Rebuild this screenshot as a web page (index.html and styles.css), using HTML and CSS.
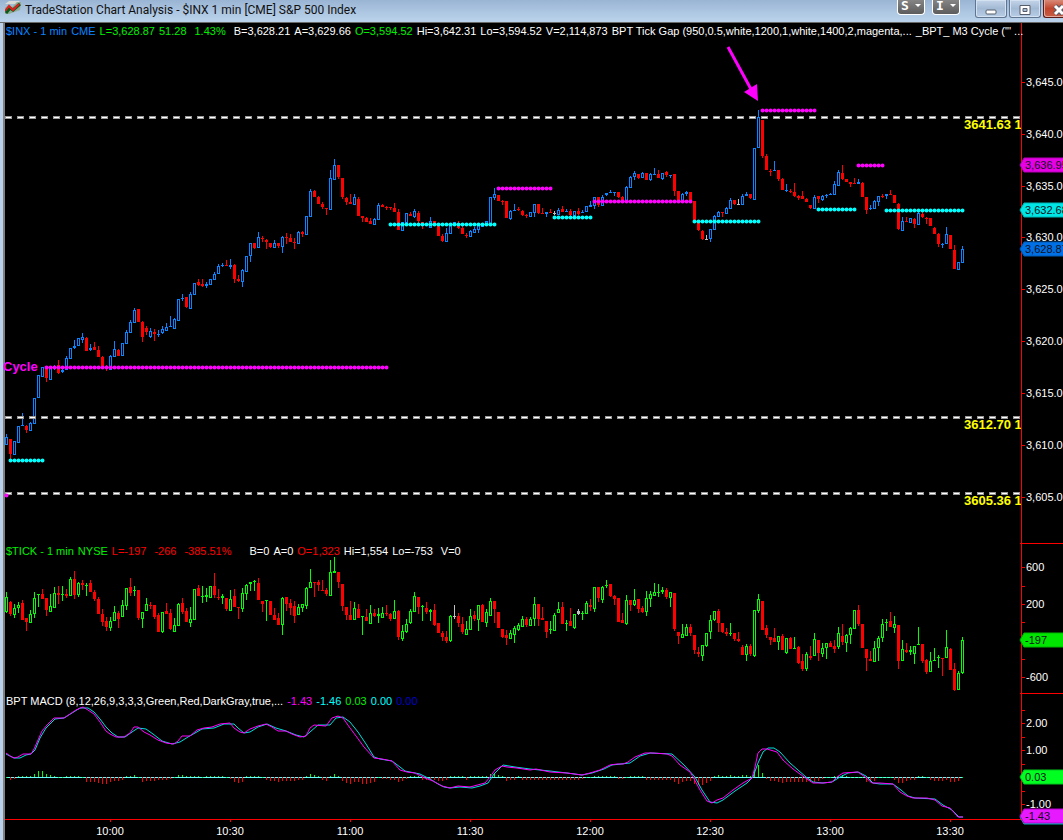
FILE: index.html
```html
<!DOCTYPE html>
<html lang="en">
<head>
    <meta charset="UTF-8">
    <meta name="viewport" content="width=device-width, initial-scale=1.0">
    <title>TradeStation Chart Analysis - $INX 1 min [CME] S&amp;P 500 Index</title>
    <link rel="stylesheet" href="styles.css">
</head>
<body>
    <div class="window">
        <header class="title-bar">
            <svg class="app-icon" viewBox="0 0 16 14" aria-hidden="true">
                <path d="M0 3 L4 0 H15 L11 3 Z" fill="#d8dcd8"/>
                <path d="M0 7 L4 3 L7 6 L12 1 L16 1 L15 9 L4 13 L0 13 Z" fill="#8fae96"/>
                <path d="M1 12 L5 7 L8 9 L15 3" fill="none" stroke="#0b5a1c" stroke-width="3"/>
                <path d="M0 10 L4 5 L8 9 L14 3" fill="none" stroke="#e02020" stroke-width="2"/>
            </svg>
            <h1 class="title">TradeStation Chart Analysis - $INX 1 min [CME] S&amp;P 500 Index</h1>
            <div class="tools">
                <button class="tool" type="button" aria-label="Symbol">S<span class="caret"></span></button>
                <button class="tool" type="button" aria-label="Interval">I<span class="caret"></span></button>
            </div>
            <div class="controls">
                <button class="control" type="button" aria-label="Minimize">
                    <svg viewBox="0 0 12 12"><rect x="1" y="6" width="10" height="4" rx="1" fill="#fff" stroke="#565d68"/></svg>
                </button>
                <button class="control" type="button" aria-label="Maximize">
                    <svg viewBox="0 0 12 12"><path d="M1 1.5 H11 V10.5 H1 Z M4 4.5 V7.500 H8 V4.5 Z" fill="#fff" fill-rule="evenodd" stroke="#565d68"/></svg>
                </button>
                <button class="control close" type="button" aria-label="Close">
                    <svg viewBox="0 0 12 12"><path d="M2 2 L10 10 M10 2 L2 10" stroke="#565d68" stroke-width="5"/><path d="M2 2 L10 10 M10 2 L2 10" stroke="#fff" stroke-width="3"/></svg>
                </button>
            </div>
        </header>

        <main class="chart">
            <section class="pane">
                <div class="status">
                    <span class="blue">$INX - 1 min</span>
                    <span class="blue">CME</span>
                    <span class="green">L=3,628.87</span>
                    <span class="green">51.28</span>
                    <span class="green push">1.43%</span>
                    <span class="push">B=3,628.21</span>
                    <span>A=3,629.66</span>
                    <span class="green">O=3,594.52</span>
                    <span>Hi=3,642.31</span>
                    <span>Lo=3,594.52</span>
                    <span>V=2,114,873</span>
                    <span>BPT Tick Gap (950,0.5,white,1200,1,white,1400,2,magenta,...</span>
                    <span>_BPT_ M3 Cycle ("' ...</span>
                </div>
                <svg class="plot" id="price" viewBox="5 23 1058 520"></svg>
            </section>

            <section class="pane">
                <div class="status">
                    <span class="green">$TICK - 1 min</span>
                    <span class="green">NYSE</span>
                    <span class="red">L=-197</span>
                    <span class="red push">-266</span>
                    <span class="red push">-385.51%</span>
                    <span class="push-more">B=0</span>
                    <span>A=0</span>
                    <span class="red">O=1,323</span>
                    <span>Hi=1,554</span>
                    <span>Lo=-753</span>
                    <span class="push">V=0</span>
                </div>
                <svg class="plot" id="tick" viewBox="5 543 1058 150"></svg>
            </section>

            <section class="pane">
                <div class="status">
                    <span>BPT MACD (8,12,26,9,3,3,3,Green,Red,DarkGray,true,...</span>
                    <span class="magenta">-1.43</span>
                    <span class="cyan">-1.46</span>
                    <span class="green">0.03</span>
                    <span class="cyan">0.00</span>
                    <span class="navy">0.00</span>
                </div>
                <svg class="plot" id="macd" viewBox="5 693 1058 126"></svg>
            </section>

            <svg class="plot" id="time" viewBox="5 819 1058 21"></svg>
        </main>
    </div>

    <script src="chart.js"></script>
</body>
</html>
```

FILE: styles.css
```css
* {
    box-sizing: border-box;
}

body {
    margin: 0;
    background-color: #000;
    color: #fff;
    font-family: "Liberation Sans", Arial, sans-serif;
    font-size: 11px;
    overflow-x: hidden;
}

.window {
    min-height: 100vh;
    border-left: 3px solid #b9d1ea;
}

/* title bar */
.title-bar {
    display: flex;
    align-items: flex-start;
    height: 23px;
    margin-left: -3px;
    padding-left: 5px;
    background: linear-gradient(#9ab5d4, #b9d1ea 20px);
    border-bottom: 1px solid #696969;
    overflow: hidden;
}

.app-icon {
    width: 16px;
    height: 14px;
    margin-top: 1px;
    flex: none;
}

.title {
    flex: 1;
    min-width: 0;
    margin: 0 0 0 4px;
    color: #111;
    font-family: Roboto, "Open Sans", sans-serif;
    font-size: 12px;
    font-weight: 400;
    line-height: 20px;
    white-space: nowrap;
    overflow: hidden;
}

.tools {
    display: flex;
    gap: 7px;
    margin-right: 15px;
}

.tool {
    display: flex;
    align-items: center;
    justify-content: center;
    gap: 6px;
    width: 28px;
    height: 15px;
    padding: 0 0 3px;
    border: 1px solid #fff;
    border-top: 0;
    border-radius: 0 0 4px 4px;
    background: linear-gradient(#858585, #5c5c5c);
    color: #fff;
    font-family: "DejaVu Sans Mono", monospace;
    font-size: 13px;
    font-weight: bold;
    line-height: 11px;
}

.caret {
    border: 3px solid transparent;
    border-top-color: #fff;
    border-bottom: 0;
}

.controls {
    display: flex;
    gap: 2px;
}

.control {
    width: 32px;
    height: 18px;
    padding: 2px 0 0;
    border: 1px solid #5f7590;
    border-top: 0;
    border-radius: 0 0 3px 3px;
    background: linear-gradient(#c3d4e8, #a3bad5 50%, #b8cde6);
    box-shadow: inset 0 0 0 1px #d3e1f1;
    text-align: center;
}

.control svg {
    width: 12px;
    height: 12px;
    display: block;
    margin: 0 auto;
}

.close {
    width: 20px;
    border-right: 0;
    border-color: #5a1a14;
    border-radius: 0 0 0 3px;
    background: linear-gradient(#d98a78, #c0452c 50%, #c75c45);
    box-shadow: inset 1px -1px 0 #e3a99d;
}

.close svg {
    margin-left: 9px;
}

/* chart */
.chart {
    border-left: 2px solid #808080;
}

.pane {
    display: grid;
}

.pane > * {
    grid-area: 1 / 1;
}

.status {
    display: flex;
    gap: 4px;
    align-self: start;
    z-index: 1;
    padding-left: 1px;
    line-height: 16px;
    white-space: nowrap;
}

.push {
    margin-left: 4px;
}

.push-more {
    margin-left: 14px;
}

.plot {
    display: block;
    width: 100%;
    height: auto;
    overflow: visible;
}

.plot text {
    fill: #fff;
    font-size: 11px;
}

.plot .level-label {
    fill: #ff0;
    font-size: 13px;
    font-weight: bold;
}

.plot .cycle-label {
    fill: #f0f;
    font-size: 13px;
    font-weight: bold;
}

.plot .tag-text {
    fill: #101020;
}

.blue {
    color: #0a84ff;
}

.green {
    color: #00f000;
}

.red {
    color: #f00;
}

.magenta {
    color: #f0f;
}

.cyan {
    color: #0ff;
}

.navy {
    color: #00c;
}
```

FILE: chart.js
```js
const UP = '#0a84ff';
const AXIS_X = 1021;

// one entry per minute: direction, then high,top,bottom,low (or top,bottom when there is no wick)
const priceBars = `
u434,437,445,445 d439,439,454,459 u441,455 u426,443 u413,425,426,426 d425,426,430,433 u422,423,431,431 u398,424
u375,398 u367,377 d368,368,378,382 u368,380 u365,367,368,370 d360,365,373,374 u369,370,372,373 u356,358,370,370
u348,359 u340,346,348,349 u338,346 u333,337,340,343 d337,338,351,351 u344,348,350,351 d342,347,350,350 d346,350,357,357
d356,357,368,368 d365,368,369,371 u355,356,370,370 u341,349,357,357 d349,350,356,356 u343,356 u330,332,344,344 u320,322,333,333
u308,310,323,323 d309,322 d321,322,337,342 d326,328,332,335 u328,331,337,338 d329,332,334,341 u330,334,335,337 u326,329,333,334
u323,327,331,331 u316,326,327,327 u318,319,329,329 u299,321 u294,298,299,301 d297,297,307,308 u292,294,309,309 u283,295
d279,282,285,286 d279,284,286,287 u282,284,286,288 u279,285 u272,274,280,280 u264,266,274,274 u263,265,266,267 d260,265,266,266
u259,265,267,269 d264,265,279,283 d275,279,281,282 u269,270,282,287 u256,272 u243,243,256,262 d243,243,248,249 u232,237,248,248
d236,238,239,242 d239,240,242,249 d243,243,247,248 u240,243,248,248 d243,243,246,248 u236,237,247,253 d233,237,238,244 d234,238,242,242
d238,242,243,249 u231,232,244,244 d231,232,234,237 u216,235 u189,191,217,217 d190,191,197,197 d196,197,204,204 d202,204,207,209
d208,208,209,215 u170,178,210,210 u159,165,180,180 d165,165,177,179 d178,178,197,199 d197,198,202,205 d194,202,204,204 u194,197,205,205
d197,199,216,216 d216,216,218,222 d217,218,222,222 d218,221,224,224 u218,219,225,225 u203,205,220,220 d204,205,207,207 d206,207,208,210
d207,207,208,210 d203,208,212,212 d209,212,230,230 u222,231 u213,223 d212,214,216,216 u209,211,217,218 d211,213,221,223
d222,222,226,229 u223,226 u217,221,228,228 d221,224 d224,236 d234,236,241,242 u228,233,242,242 u225,234
u222,225 d221,225,228,229 d226,228,234,234 d233,235,236,238 u230,231,237,237 u227,229,233,233 u224,224,230,233 u224,227
u221,225 u197,226 u188,194,198,200 d195,201 d200,201,202,205 d201,218 u210,211,219,220 u204,210,211,211
d207,209,210,211 d210,211,215,216 d214,215,216,218 u212,217 u204,204,213,217 d204,204,213,214 d208,213,214,214 u212,212,214,217
d209,212,213,213 n211,213,214,215 u208,210,215,215 d206,209,212,212 u209,211,212,212 d209,211,215,216 u211,216 d208,211,214,215
u210,212,213,213 u206,212 u201,205,207,207 u197,197,206,209 d197,197,205,207 u195,197,206,206 u193,193,195,196 u190,192,193,193
u192,192,193,196 d192,192,197,198 d196,197,200,200 u186,187,202,202 u176,177,188,188 u171,173,177,180 d174,174,178,179 u172,173,178,178
d173,180 u173,174,180,181 u168,174,175,175 d170,174,178,178 u173,173,179,180 d171,172,175,177 u175,175,176,178 d174,174,191,196
d191,200 u193,194,201,201 u191,192,194,196 d192,201 d201,222 d222,222,230,231 d230,231,239,240 n235,239,240,240
u229,229,239,242 u215,216,230,230 u211,212,217,217 d212,212,213,217 u207,208,214,214 u198,200,209,209 d200,200,204,205 n199,204,205,205
u194,196,205,205 u192,194,196,196 d194,194,198,199 u148,200 u110,117,148,148 d120,120,156,158 d154,156,170,170 d169,171,172,176
u161,170,171,171 d170,170,179,181 d178,179,190,190 u184,190,191,192 d189,191,192,193 d183,192,196,197 d195,196,198,200 d191,196,199,199
d198,199,202,202 d205,205,208,209 u195,197,209,209 d196,196,199,203 u195,196,200,201 u194,195,196,198 u193,194,195,195 u181,184,195,195
u170,172,186,186 d165,173,179,180 d179,182 d182,182,184,187 d178,183,184,184 u179,182,184,184 d182,183,197,197 d197,197,210,214
u205,208,209,210 u200,201,209,209 u196,196,202,206 d194,196,197,198 u194,194,196,199 d190,194,195,195 d195,203 d203,204,229,230
u217,221,231,231 d217,221,222,222 u218,223 d218,219,224,228 u212,213,225,225 d212,214,217,218 d217,218,219,224 d218,226
d227,228,234,234 d233,234,244,247 u243,244,245,248 u227,234,244,244 d235,249 d245,250,269,269 u262,270 u246,249,263,263`;

const tickBars = `
u592,597,612,613 d601,602,614,616 u604,608,615,618 u602,605,608,613 d600,603,620,620 d618,618,622,631 u610,614,623,623 u592,598,614,618
u594,594,595,607 d589,594,599,599 d598,598,610,616 u594,606,612,612 u587,593,608,608 d586,593,595,604 u586,594,595,601 d589,594,596,598
u577,579,596,596 d571,579,595,599 u582,583,595,597 d580,583,585,590 u583,585,586,596 d580,583,592,592 d590,592,599,601 d597,599,614,614
d609,614,622,626 d617,621,627,631 u617,621,628,631 u606,612,621,621 d611,613,619,628 u600,605,617,617 u588,588,606,610 d578,587,593,596
u586,590,591,596 d590,590,618,620 u612,612,619,628 u598,604,611,611 d602,605,606,609 d605,605,617,619 d613,615,632,632 u612,612,632,633
d603,611,614,614 d609,613,629,630 u618,625,632,632 u603,604,626,626 d598,603,612,614 d608,611,622,622 u607,619,623,627 u589,620
d585,588,596,596 u586,596,597,603 u588,595,597,602 u586,598 d573,586,595,598 d589,597,598,600 u594,596,598,604 d598,598,609,611
u590,599,611,611 d589,596,607,607 d607,607,608,619 u588,593,609,612 u584,585,594,600 u582,582,584,591 u580,581,582,591 d578,583,600,600
d601,601,604,612 u600,600,601,621 d601,615 d608,615,620,620 d613,618,625,625 u597,598,625,635 d597,597,604,611 d599,603,608,615
d601,606,616,623 u604,607,615,615 u604,604,608,612 u587,588,606,609 u569,582,588,588 d582,582,583,597 d580,582,585,591 d580,590,591,591
d588,590,594,596 u560,572,596,596 u557,571,573,573 d572,572,582,588 d584,584,606,611 d607,607,615,620 d601,615,620,620 u602,608,620,620
d604,609,618,618 u616,616,617,635 d609,617,621,621 u605,613,624,624 d609,613,616,617 u608,614,616,623 u607,613,618,618 d605,613,614,616
d613,614,619,621 u600,611,619,619 d610,611,637,640 u625,631,639,641 u619,624,632,633 u609,611,623,624 u592,596,612,612 d597,597,607,614
u605,606,607,621 d602,608,612,614 u609,610,612,621 d604,610,625,626 d623,633 d631,633,637,641 d631,637,641,643 u615,616,641,642
n605,616,617,619 d613,616,623,627 d617,624,632,634 u621,629,635,635 u609,616,630,630 d611,615,619,621 u605,605,620,631 d604,605,622,622
u609,612,623,627 u598,601,616,616 d601,601,609,623 d612,628 d629,629,637,638 d630,635,638,645 u630,633,639,639 u626,628,635,643
u623,625,630,631 u616,619,627,627 d617,619,625,627 u617,619,626,626 u597,604,619,626 d604,604,619,626 d607,618,620,620 d621,621,632,638
u621,629,630,634 u613,615,631,631 u602,609,613,613 d602,607,624,624 u620,623,624,631 d608,621,626,626 u614,614,628,629 n609,611,614,615
u611,613,614,620 u601,603,614,614 d599,605,607,611 u587,587,609,612 d587,587,598,602 u586,587,600,603 u580,585,586,588 d584,584,596,597
d595,596,599,605 d598,622 d613,620,623,623 u595,600,624,625 d600,600,605,611 u589,600,605,606 d599,599,609,613 d606,608,612,613
u591,598,612,616 u591,594,599,607 u583,592,596,596 u584,592,593,597 u587,590,592,594 d588,590,597,599 u592,592,598,607 d593,593,629,631
d632,632,636,644 u624,634,638,638 u624,627,636,636 d624,627,633,636 d635,635,650,654 d647,652,654,657 u645,645,656,661 u633,633,646,647
u615,620,632,639 u611,611,620,621 d609,611,623,632 d623,623,632,633 d628,632,634,636 u623,633,634,636 d633,633,639,641 d632,639,641,642
d645,647,655,655 u644,646,655,661 d644,646,654,656 u610,610,656,657 u594,599,611,613 d601,630 d625,628,635,638 d637,637,640,645
d628,638,642,642 u636,636,642,650 d634,636,650,650 u638,638,653,654 d637,638,649,649 u637,648,649,649 d646,647,663,664 d654,661,669,671
u652,654,669,671 d646,656,658,660 u633,639,656,656 d640,640,653,661 u643,648,654,657 u643,643,648,659 d641,643,647,647 d640,646,649,653
u627,633,647,649 d624,636,642,645 u634,635,643,652 u627,628,635,644 u610,629 d605,610,624,626 d624,648 d649,649,658,671
d651,659,661,661 u641,648,662,662 u636,638,648,661 u619,624,638,642 u619,622,623,631 d612,621,627,627 u616,624,628,633 d625,625,661,669
u640,649,661,661 d643,650,652,653 u646,650,652,655 u646,646,654,664 u627,644,645,645 d644,644,661,663 d659,660,672,674 u652,661,672,672
u648,660,661,661 u655,657,658,668 d658,658,659,676 u630,647,658,658 d648,649,670,670 d663,669,690,691 u671,673,690,690 u637,640,673,674`;

const histogram = [
    0, -2, -1, 1, 1, 1, 1, 3, 6, 6, 3, 2, 1, 0, 0, 1, 1, 1, 1, 0,
    -4, -4, -4, -5, -6, -6, -4, -3, -3, -2, 1, 1, 2, 0, -4, -3, -3, -3, -2, -2,
    -2, -1, 0, 2, 2, 1, 1, 1, 1, 0, 1, 1, 1, 1, 1, 0, -1, -4, -5, -4,
    1, 1, 1, 1, 0, -2, -3, -3, -4, -3, -3, -3, -3, -2, -2, 1, 3, 2, 1, -2,
    -3, 1, 3, 1, -3, -5, -6, -4, -4, -6, -6, -5, -4, 0, -1, -1, -2, -2, -4, -3,
    -1, 1, 1, 1, -2, -2, -2, -2, -3, -3, -2, 1, 1, 1, 1, -2, 1, 1, 1, 1,
    1, 3, 4, 2, 1, -3, -2, -2, 1, -2, -2, -2, -2, -2, -2, -2, -2, -2, -2, -2,
    -2, -2, -2, -2, -1, 0, 0, 1, 1, 1, 1, 1, 1, -1, -1, 0, 1, 1, 1, 1,
    -2, -2, -2, -2, -2, -2, -2, -4, -6, -4, -3, -3, -6, -7, -7, -5, -3, 1, 2, 1,
    1, 2, 1, 1, 2, 2, 1, 7, 12, 4, -1, -3, -3, -4, -5, -4, -4, -4, -4, -4,
    -4, -4, -4, -3, -1, 0, 0, 1, 1, 2, 1, 0, 0, 0, 0, -4, -4, -3, 0, 0,
    0, 0, -2, -5, -5, -3, -2, -2, 1, 1, 0, -2, -3, -3, -3, -2, -4, -4, -3, 0
];

const macdLine = `6,753 10,756 14,758 18,757 23,754 31,754 34,749 38,740 42,731 47,725 54,718 64,718 70,714 76,710 83,707
88,710 94,714 100,722 106,731 110,734 116,737 124,737 130,733 134,727 138,727 144,732 150,735 158,740 166,743 174,744
178,741 182,736 190,736 197,730 204,728 212,727 220,724 230,723 234,728 240,732 244,733 250,729 258,726 266,724 272,727
278,731 286,731 292,734 300,737 306,736 310,728 314,725 326,726 332,718 338,716 343,718 350,728 356,736 364,747 374,758
382,759 392,761 400,770 407,772 415,773 425,778 433,781 442,786 450,788 458,786 470,787 485,783 490,777 495,770 502,766
507,767 517,768 530,770 536,769 550,772 567,773 582,775 590,773 600,770 610,765 617,764 623,764 628,762 635,757 645,753
653,753 667,754 672,756 680,765 690,772 693,777 700,790 707,801 712,803 717,800 723,798 733,790 743,783 752,778 755,767
758,753 762,749 767,749 777,752 783,760 793,769 807,779 813,783 823,783 832,782 837,777 843,773 858,772 865,777 872,783
880,783 893,784 900,792 907,796 913,798 927,798 935,800 942,806 950,808 958,817 963,817`;

const signalLine = `6,754 10,756 14,758 20,758 26,755 31,754 35,750 40,738 46,728 55,719 64,718 72,713 80,708 88,708 94,712
100,719 106,727 112,733 118,737 125,737 132,732 138,728 146,729 153,734 162,741 172,744 180,742 188,737 202,729 214,728
224,724 234,724 238,728 244,733 250,732 258,727 267,724 276,728 286,731 296,735 304,737 310,732 318,725 330,725 336,718
343,717 350,722 358,732 366,744 374,757 380,759 392,761 400,767 405,771 420,774 430,779 438,784 444,787 450,788 460,787
472,788 480,786 488,783 494,774 503,765 515,767 530,769 550,771 567,773 582,775 592,773 604,769 612,765 630,763 640,756
650,753 672,754 684,765 695,777 702,790 710,802 717,803 723,800 735,791 747,783 753,777 758,763 763,752 768,748 774,748
780,752 790,763 806,777 813,782 823,783 832,782 840,777 848,773 858,772 866,776 873,783 880,784 893,784 901,790 908,796
915,798 935,799 943,805 952,810 959,817 963,817`;

function add(parent, name, attrs, text) {
    const el = document.createElementNS('http://www.w3.org/2000/svg', name);
    for (const key in attrs) {
        el.setAttribute(key, attrs[key]);
    }
    if (text) {
        el.textContent = text;
    }
    parent.appendChild(el);
    return el;
}

function line(svg, x1, y1, x2, y2, stroke, extra) {
    add(svg, 'line', { x1, y1, x2, y2, stroke, ...extra });
}

function drawBars(svg, data, upColor) {
    const g = add(svg, 'g', { 'shape-rendering': 'crispEdges' });
    const colors = { u: upColor, d: '#f00', n: '#c0c0c0' };
    data.trim().split(/\s+/).forEach((bar, i) => {
        const n = bar.slice(1).split(',').map(Number);
        const [high, top, bottom, low] = n.length === 2 ? [n[0], n[0], n[1], n[1]] : n;
        const x = 6 + i * 4;
        const fill = colors[bar[0]];
        add(g, 'rect', { x, y: high, width: 1, height: low - high, fill });
        add(g, 'rect', { x: x - 1, y: top, width: 3, height: bottom - top, fill });
        if (bar[0] === 'u' && bottom - top > 2) {
            add(g, 'rect', { x, y: top + 1, width: 1, height: bottom - top - 2, fill: '#000' });
        }
    });
}

function drawAxis(svg, top, bottom, ticks, labels) {
    const g = add(svg, 'g', { 'shape-rendering': 'crispEdges' });
    add(g, 'rect', { x: AXIS_X, y: top, width: 1, height: bottom - top, fill: '#f00' });
    ticks.forEach(y => add(g, 'rect', { x: AXIS_X, y, width: 4, height: 1, fill: '#f00' }));
    labels.forEach(([y, text]) => add(svg, 'text', { x: 1026, y: y + 4 }, text));
}

function drawTag(svg, y, text, fill, edge) {
    add(svg, 'path', { d: `M1020 ${y} L1024 ${y - 7} H1064 V${y + 7} H1024 Z`, fill, stroke: edge });
    add(svg, 'text', { x: 1025, y: y + 4, class: 'tag-text' }, text);
}

function drawDots(svg, x1, x2, y, stroke) {
    line(svg, x1, y + 0.5, x2 + 1, y + 0.5, stroke, { 'stroke-width': 1, 'stroke-opacity': 0.5 });
    line(svg, x1 + 0.5, y + 0.5, x2 + 0.6, y + 0.5, stroke, {
        'stroke-width': 4, 'stroke-linecap': 'round', 'stroke-dasharray': '0 4'
    });
}

// price pane
const price = document.getElementById('price');
drawBars(price, priceBars, UP);

[[117, '3641.63 1'], [417, '3612.70 1'], [493, '3605.36 1']].forEach(([y, text]) => {
    line(price, 5, y + 0.5, AXIS_X, y + 0.5, '#999', { 'stroke-width': 3, 'stroke-dasharray': '7 5' });
    line(price, 6, y + 0.5, AXIS_X, y + 0.5, '#fff', { 'stroke-width': 1, 'stroke-dasharray': '5 7' });
    add(price, 'text', { x: 964, y: y + 12, class: 'level-label' }, text);
});

[
    [10, 42, 460, '#0ff'], [46, 386, 367, '#f0f'], [390, 494, 224, '#0ff'], [498, 550, 188, '#f0f'],
    [554, 590, 217, '#0ff'], [594, 690, 201, '#f0f'], [694, 758, 221, '#0ff'], [762, 814, 110, '#f0f'],
    [818, 854, 209, '#0ff'], [858, 882, 165, '#f0f'], [886, 962, 210, '#0ff'], [6, 6, 495, '#f0f']
].forEach(d => drawDots(price, ...d));

add(price, 'text', { x: 3, y: 371, class: 'cycle-label' }, 'Cycle');
line(price, 728, 47, 752, 91, '#f0f', { 'stroke-width': 3 });
add(price, 'path', { d: 'M758 101 L744 92 L757 84 Z', fill: '#f0f' });

// hide what runs past the axis
add(price, 'rect', { x: AXIS_X, y: 23, width: 42, height: 520, fill: '#000' });
const priceTicks = [82, 134, 186, 237, 289, 341, 393, 445, 497];
drawAxis(price, 23, 543, priceTicks, priceTicks.map((y, i) => [y, `3,${645 - i * 5}.00`]));
drawTag(price, 165, '3,636.95', '#e600e6', '#b400b4');
drawTag(price, 210, '3,632.68', '#00e6e6', '#00b4b4');
drawTag(price, 249, '3,628.87', '#0070e6', '#0058b4');

// tick pane
const tick = document.getElementById('tick');
drawBars(tick, tickBars, '#0f0');
add(tick, 'rect', { x: 1020, y: 543, width: 43, height: 1, fill: '#f00' });
drawAxis(tick, 543, 693, [567, 586, 604, 622, 640, 659, 677], [[567, '600'], [604, '200'], [677, '-600']]);
drawTag(tick, 640, '-197', '#00e600', '#00b400');

// MACD pane
const macd = document.getElementById('macd');
add(macd, 'rect', { x: 6, y: 777, width: 957, height: 1, fill: '#6ff' });
const bars = add(macd, 'g', { 'shape-rendering': 'crispEdges' });
histogram.forEach((v, i) => {
    add(bars, 'rect', {
        x: 6 + i * 4,
        y: v > 0 ? 777 - v : 777,
        width: 1,
        height: v > 0 ? v : 2 - Math.min(v + 1, 1),
        fill: v < 0 ? '#f00' : '#0f0'
    });
});
add(macd, 'polyline', { points: signalLine, fill: 'none', stroke: '#00dede' });
add(macd, 'polyline', { points: macdLine, fill: 'none', stroke: '#f0f' });
add(macd, 'rect', { x: 1020, y: 693, width: 43, height: 1, fill: '#f00' });
drawAxis(macd, 693, 819, [710, 723, 737, 750, 764, 791, 804], [[723, '2.00'], [750, '1.00'], [804, '-1.00']]);
drawTag(macd, 777, '0.03', '#00ff20', '#00c81e');

// time axis
const time = document.getElementById('time');
add(time, 'rect', { x: 5, y: 819, width: 1017, height: 1, fill: '#f00' });
['10:00', '10:30', '11:00', '11:30', '12:00', '12:30', '13:00', '13:30'].forEach((label, i) => {
    const x = 110 + i * 120;
    add(time, 'rect', { x, y: 819, width: 1, height: 3, fill: '#f00' });
    add(time, 'text', { x, y: 835, 'text-anchor': 'middle' }, label);
});
drawTag(time, 817, '', '#00e6e6', '#00b4b4');
drawTag(time, 816, '-1.43', '#e619ff', '#b400c8');
```
